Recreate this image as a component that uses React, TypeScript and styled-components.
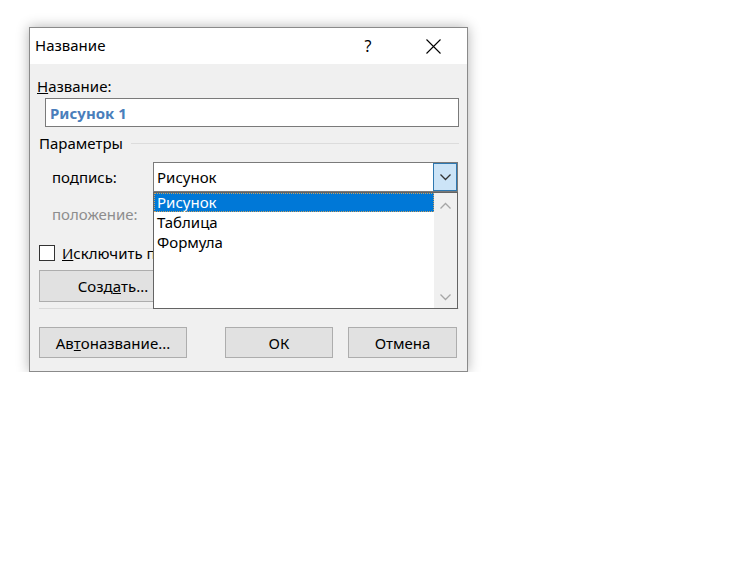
import styled, { createGlobalStyle } from 'styled-components';

const GlobalStyle = createGlobalStyle`
  html, body {
    margin: 0;
    padding: 0;
    background: #ffffff;
  }
  body {
    font-family: "Segoe UI", "Noto Sans", "Open Sans", sans-serif;
    font-size: 15px;
    color: #000;
  }
`;

const Page = styled.div`
  padding: 27px 0 0 29px;
`;

const Dialog = styled.div`
  width: 437px;
  height: 343px;
  border: 1px solid #8a8a8a;
  background: #f0f0f0;
  box-shadow: 0 0 12px rgba(0, 0, 0, 0.3);
  display: flex;
  flex-direction: column;
`;

const TitleBar = styled.div`
  height: 36px;
  background: #ffffff;
  display: flex;
  align-items: center;
`;

const Title = styled.div`
  flex: 1;
  padding-left: 5px;
  margin-top: -2px;
  font-size: 15px;
`;

const TitleButton = styled.div<{ $gap: number }>`
  width: 46px;
  height: 36px;
  margin-right: ${(p) => p.$gap}px;
  display: flex;
  align-items: center;
  justify-content: center;
  font-size: 16px;
  color: #000;
`;

const Body = styled.div`
  flex: 1;
  display: flex;
  flex-direction: column;
  padding: 0 9px 0 9px;
`;

const Label = styled.div<{ $top: number; $shift?: number }>`
  margin-top: ${(p) => p.$top}px;
  margin-left: ${(p) => p.$shift ?? 0}px;
  height: 20px;
  line-height: 20px;
  white-space: nowrap;
`;

const TextInput = styled.div`
  margin: 2px -1px 0 6px;
  height: 27px;
  border: 1px solid #7a7a7a;
  background: #fff;
  display: flex;
  align-items: center;
  padding-left: 4px;
  font-weight: 700;
  color: #4a7ebb;
`;

const GroupHeader = styled.div`
  margin-top: 6px;
  height: 20px;
  display: flex;
  align-items: center;
  gap: 8px;
  &::after {
    content: '';
    flex: 1;
    height: 1px;
    background: #dcdcdc;
    margin-right: -1px;
  }
`;

const FieldRow = styled.div<{ $top: number; $height: number }>`
  margin-top: ${(p) => p.$top}px;
  height: ${(p) => p.$height}px;
  display: flex;
  align-items: center;
`;

const FieldLabel = styled.div<{ $muted?: boolean }>`
  width: 101px;
  padding-left: 13px;
  white-space: nowrap;
  color: ${(p) => (p.$muted ? '#8d8d8d' : '#000')};
`;

const Combo = styled.div`
  position: relative;
  flex: 1;
  height: 30px;
  box-sizing: border-box;
  border: 1px solid #7a7a7a;
  background: #fff;
  display: flex;
  align-items: center;
`;

const ComboText = styled.div`
  flex: 1;
  padding-left: 3px;
`;

const ComboButton = styled.div`
  width: 22px;
  height: 26px;
  border: 1px solid #2f78b0;
  background: #cce4f7;
  display: flex;
  align-items: center;
  justify-content: center;
`;

const DropList = styled.div`
  position: absolute;
  left: -1px;
  top: 29px;
  width: 305px;
  height: 117px;
  box-sizing: border-box;
  border: 1px solid #646464;
  background: #fff;
  display: flex;
  z-index: 5;
`;

const Items = styled.div`
  flex: 1;
  padding-top: 0;
`;

const Item = styled.div<{ $selected?: boolean }>`
  height: 19px;
  line-height: 19px;
  padding-left: 3px;
  box-sizing: border-box;
  background: ${(p) => (p.$selected ? '#0078d7' : 'transparent')};
  color: ${(p) => (p.$selected ? '#fff' : '#000')};
  outline: ${(p) => (p.$selected ? '1px dotted #c8a060' : 'none')};
  outline-offset: -1px;
  margin-bottom: 1px;
`;

const ScrollBar = styled.div`
  width: 23px;
  background: #f0f0f0;
  display: flex;
  flex-direction: column;
  justify-content: space-between;
  align-items: center;
  padding: 9px 0 7px;
`;

const CheckRow = styled.div`
  margin-top: 16px;
  height: 18px;
  width: 114px;
  overflow: hidden;
  display: flex;
  align-items: center;
  gap: 7px;
  white-space: nowrap;
`;

const CheckBox = styled.div`
  flex: none;
  width: 14px;
  height: 14px;
  border: 1px solid #333;
  background: #fff;
`;

const Button = styled.div<{ $width: number }>`
  width: ${(p) => p.$width}px;
  height: 100%;
  box-sizing: border-box;
  border: 1px solid #adadad;
  background: #e1e1e1;
  display: flex;
  align-items: center;
  justify-content: center;
  white-space: nowrap;
`;

const ButtonRow = styled.div<{ $top: number; $height: number }>`
  margin-top: ${(p) => p.$top}px;
  height: ${(p) => p.$height}px;
  display: flex;
`;

const Spacer = styled.div<{ $width: number }>`
  width: ${(p) => p.$width}px;
`;

const Separator = styled.div`
  margin-top: 6px;
  height: 1px;
  background: #dadada;
  margin-right: -1px;
`;

const Chevron = ({ up, color }: { up?: boolean; color: string }) => (
  <svg width="11" height="7" viewBox="0 0 11 7">
    <path
      d={up ? 'M0.5 6.5 L5.5 1.5 L10.5 6.5' : 'M0.5 0.5 L5.5 5.5 L10.5 0.5'}
      fill="none"
      stroke={color}
      strokeWidth="1.3"
    />
  </svg>
);

export default function App() {
  return (
    <>
      <GlobalStyle />
      <Page>
        <Dialog>
          <TitleBar>
            <Title>Название</Title>
            <TitleButton $gap={19}>?</TitleButton>
            <TitleButton $gap={11}>
              <svg width="15" height="15" viewBox="0 0 15 15">
                <path d="M0.5 0.5 L14.5 14.5 M14.5 0.5 L0.5 14.5" stroke="#000" strokeWidth="1.1" />
              </svg>
            </TitleButton>
          </TitleBar>
          <Body>
            <Label $top={12} $shift={-2}>
              <u>Н</u>азвание:
            </Label>
            <TextInput>Рисунок 1</TextInput>
            <GroupHeader>Параметры</GroupHeader>
            <FieldRow $top={9} $height={30}>
              <FieldLabel>
                по<u>д</u>пись:
              </FieldLabel>
              <Combo>
                <ComboText>Рисунок</ComboText>
                <ComboButton>
                  <Chevron color="#333" />
                </ComboButton>
                <DropList>
                  <Items>
                    <Item $selected>Рисунок</Item>
                    <Item>Таблица</Item>
                    <Item>Формула</Item>
                  </Items>
                  <ScrollBar>
                    <Chevron up color="#a6a6a6" />
                    <Chevron color="#a6a6a6" />
                  </ScrollBar>
                </DropList>
              </Combo>
            </FieldRow>
            <FieldRow $top={8} $height={28}>
              <FieldLabel $muted>положение:</FieldLabel>
            </FieldRow>
            <CheckRow>
              <CheckBox />
              <span>
                <u>И</u>сключить подпись из названия
              </span>
            </CheckRow>
            <ButtonRow $top={8} $height={32}>
              <Button $width={148}>
                Созд<u>а</u>ть...
              </Button>
            </ButtonRow>
            <Separator />
            <ButtonRow $top={18} $height={31}>
              <Button $width={148}>
                Ав<u>т</u>оназвание...
              </Button>
              <Spacer $width={38} />
              <Button $width={108}>ОК</Button>
              <Spacer $width={15} />
              <Button $width={109}>Отмена</Button>
            </ButtonRow>
          </Body>
        </Dialog>
      </Page>
    </>
  );
}
